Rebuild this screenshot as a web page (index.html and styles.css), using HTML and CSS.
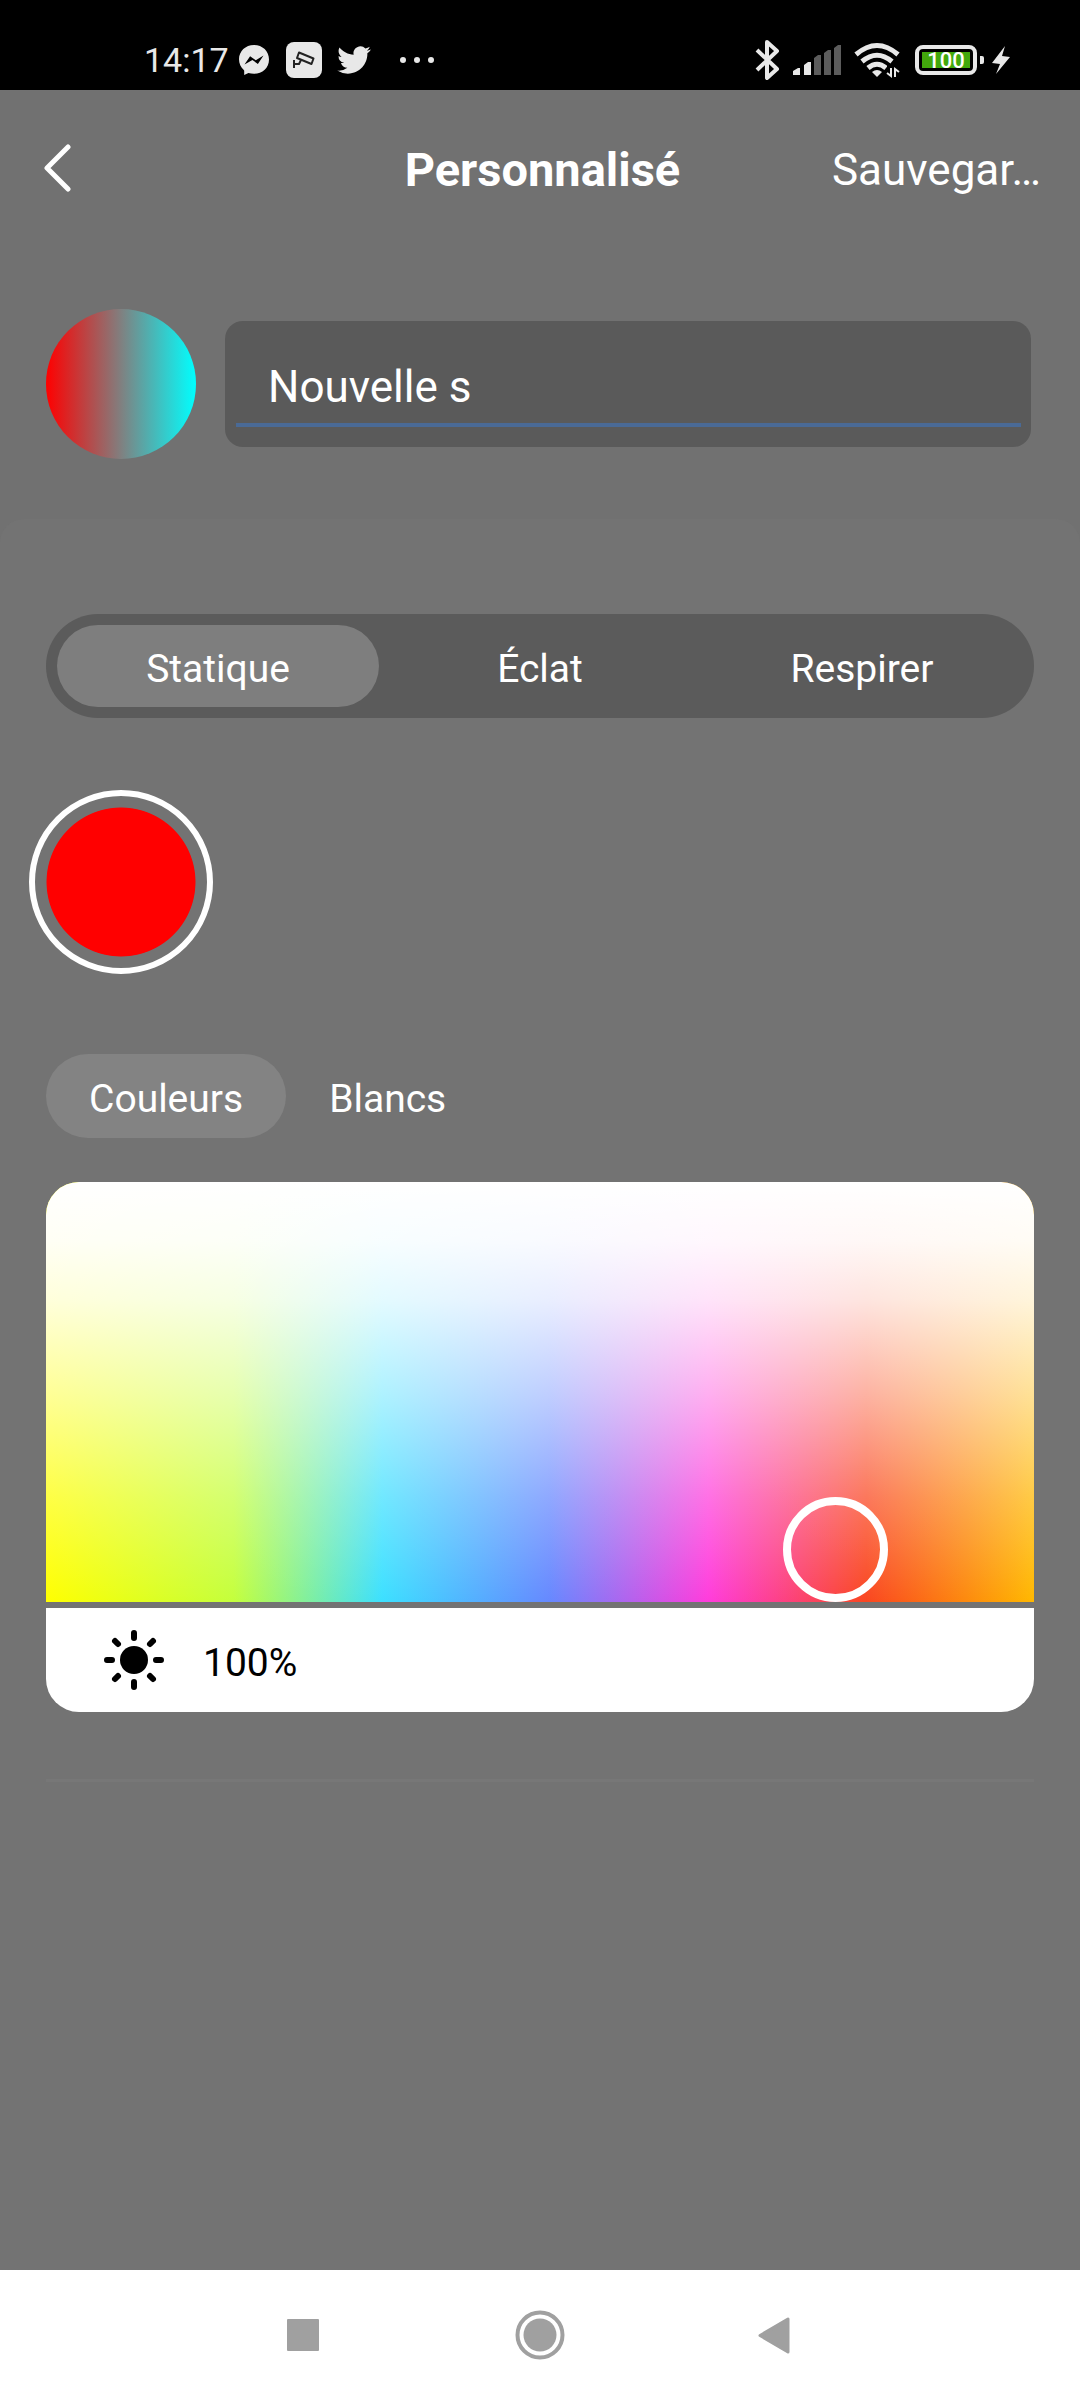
FILE: index.html
```html
<!DOCTYPE html>
<html lang="fr">
<head>
<meta charset="utf-8">
<meta name="viewport" content="width=device-width, initial-scale=1">
<title>Personnalisé</title>
<link rel="stylesheet" href="styles.css">
</head>
<body>
<div class="status-bar">
  <div class="status-left">
    <span class="clock">14:17</span>
    <svg class="icon-messenger" viewBox="0 0 30 30" width="30" height="30" aria-hidden="true">
      <path fill="#e8e8e8" d="M15 0C6.500 0 0 6.200 0 14.300c0 4.300 1.800 8 4.800 10.600.300.300.400.500.400.900V30l4.200-2c1.800.5 3.600.800 5.600.800 8.500 0 15-6.200 15-14.400S23.500 0 15 0z"/>
      <path fill="#000" d="M5.500 19.500l5.600-8.200 5.700 4 7.700-4.800-5.600 8.500-5.500-4z"/>
    </svg>
    <svg class="icon-camera" viewBox="0 0 36 36" width="36" height="36" aria-hidden="true">
      <rect width="36" height="36" rx="8" fill="#e8e8e8"/>
      <path fill="none" stroke="#222" stroke-width="2" stroke-linejoin="round" d="M13 10.500l14.500 6-2 5.500-14.500-6z"/>
      <path fill="none" stroke="#222" stroke-width="2" d="M15 18l-2 4-5 0M8 18v8"/>
    </svg>
    <svg class="icon-bird" viewBox="0 2 24 20" width="34" height="28" aria-hidden="true">
      <path fill="#e8e8e8" d="M23.950 4.570a10 10 0 01-2.820.770 4.960 4.960 0 002.160-2.720c-.950.550-2 .950-3.130 1.180a4.920 4.920 0 00-8.380 4.480C7.690 8.100 4.070 6.130 1.640 3.160a4.820 4.820 0 00-.670 2.480c0 1.710.870 3.210 2.190 4.100a4.900 4.900 0 01-2.230-.620v.060a4.920 4.920 0 003.950 4.830 5 5 0 01-2.210.080 4.940 4.940 0 004.600 3.420A9.870 9.870 0 010 19.540a14 14 0 007.550 2.210c9.050 0 14-7.500 14-13.980 0-.210 0-.420-.020-.630a9.940 9.940 0 002.460-2.550z"/>
    </svg>
    <svg class="icon-more" viewBox="0 0 36 8" width="36" height="8" aria-hidden="true">
      <g fill="#e8e8e8"><circle cx="4" cy="4" r="3"/><circle cx="18" cy="4" r="3"/><circle cx="32" cy="4" r="3"/></g>
    </svg>
  </div>
  <div class="status-right">
    <svg viewBox="0 0 26 40" width="26" height="40" aria-hidden="true">
      <path fill="none" stroke="#e8e8e8" stroke-width="4" stroke-linejoin="round" d="M2 10l20 19-10 9V2l10 9L2 30"/>
    </svg>
    <svg class="icon-signal" viewBox="0 0 50 32" width="50" height="32" aria-hidden="true">
      <g fill="#e8e8e8"><path d="M0 31v-4l5-3h2v7zM11 31V21l4-3h3v13z"/></g>
      <g fill="#5c5c5c"><path d="M21 31V14l4-3h3v20zM31 31V9l4-3h3v25zM41 31V4l4-3h3v30z"/></g>
    </svg>
    <svg class="icon-wifi" viewBox="0 0 46 36" width="46" height="36" aria-hidden="true">
      <g fill="none" stroke="#e8e8e8" stroke-width="5">
        <path d="M2 12.500q21-18 42 0M8 19.500q15-12.500 30 0M14 26q9-7.500 18 0"/>
      </g>
      <path fill="#e8e8e8" d="M18 30q5-4 10 0l-5 5z"/>
      <path fill="none" stroke="#000" stroke-width="4" d="M33 24h13"/>
      <path fill="none" stroke="#e8e8e8" stroke-width="2" d="M37 26v8l-4-3M41 35v-8l4 3"/>
    </svg>
    <div class="battery"><span class="battery-level">100</span></div>
    <svg class="icon-bolt" viewBox="0 0 20 30" width="20" height="30" aria-hidden="true">
      <path fill="#e8e8e8" d="M14 1L1 18l8 1-4 10 14-17-8-1z"/>
    </svg>
  </div>
</div>

<header class="app-bar">
  <button class="back" aria-label="Retour">
    <svg viewBox="0 0 28 48" width="28" height="48" aria-hidden="true">
      <path fill="none" stroke="#fff" stroke-width="5" stroke-linecap="round" stroke-linejoin="round" d="M24 3L3 24l21 21"/>
    </svg>
  </button>
  <h1 class="title">Personnalisé</h1>
  <button class="save">Sauvegar…</button>
</header>

<section class="scene">
  <div class="scene-preview"></div>
  <div class="name-field">
    <input class="name-input" type="text" value="Nouvelle s" aria-label="Nom de la scène">
  </div>
</section>

<main class="panel">
  <div class="segments" role="tablist">
    <button class="segment selected" role="tab" aria-selected="true">Statique</button>
    <button class="segment" role="tab" aria-selected="false">Éclat</button>
    <button class="segment" role="tab" aria-selected="false">Respirer</button>
  </div>

  <button class="swatch" aria-label="Rouge"></button>

  <div class="chips" role="tablist">
    <button class="chip selected" role="tab" aria-selected="true">Couleurs</button>
    <button class="chip" role="tab" aria-selected="false">Blancs</button>
  </div>

  <div class="picker">
    <div class="spectrum">
      <button class="picker-handle" aria-label="Couleur choisie"></button>
    </div>
    <div class="brightness">
      <svg viewBox="0 0 60 60" width="60" height="60" aria-hidden="true">
        <circle cx="30" cy="30" r="14"/>
        <g stroke="#000" stroke-width="6" stroke-linecap="round">
          <path d="M30 3v5M30 52v5M3 30h5M52 30h5M11 11l3 3M46 46l3 3M49 11l-3 3M14 46l-3 3"/>
        </g>
      </svg>
      <label class="brightness-value" for="brightness">100%</label>
      <input class="brightness-range" id="brightness" type="range" min="1" max="100" value="100">
    </div>
  </div>
  <hr class="divider">
</main>

<nav class="nav-bar">
  <button class="nav-button" aria-label="Applications récentes">
    <svg viewBox="0 0 50 50" width="50" height="50" aria-hidden="true"><rect x="9" y="9" width="32" height="32" rx="1" fill="#a0a0a0"/></svg>
  </button>
  <button class="nav-button" aria-label="Accueil">
    <svg viewBox="0 0 50 50" width="50" height="50" aria-hidden="true"><circle cx="25" cy="25" r="22.500" fill="none" stroke="#a0a0a0" stroke-width="4"/><circle cx="25" cy="25" r="16.500" fill="#a0a0a0"/></svg>
  </button>
  <button class="nav-button" aria-label="Précédent">
    <svg viewBox="0 0 50 50" width="50" height="50" aria-hidden="true"><path fill="#a0a0a0" stroke="#a0a0a0" stroke-width="3" stroke-linejoin="round" d="M36 9v33L8 25.500z"/></svg>
  </button>
</nav>
</body>
</html>
```
FILE: styles.css
```css
* {
  box-sizing: border-box;
}

body {
  margin: 0;
  min-height: 100vh;
  display: flex;
  flex-direction: column;
  background: #717171;
  color: #fff;
  font-family: Roboto, "Noto Sans", sans-serif;
}

button {
  margin: 0;
  padding: 0;
  border: 0;
  background: none;
  color: inherit;
  font: inherit;
}

svg {
  display: block;
  flex: none;
}

/* System status bar */
.status-bar {
  height: 90px;
  padding: 30px 69px 0 144px;
  display: flex;
  justify-content: space-between;
  background: #000;
  color: #e8e8e8;
}

.status-left,
.status-right {
  display: flex;
  align-items: center;
  height: 60px;
}

.clock {
  font-size: 34px;
  line-height: 40px;
}

.icon-messenger {
  margin-left: 10px;
}

.icon-camera {
  margin-left: 17px;
}

.icon-bird {
  margin-left: 15px;
}

.icon-more {
  margin-left: 28px;
}

.icon-signal {
  margin-left: 12px;
}

.icon-wifi {
  margin-left: 11px;
}

.battery {
  position: relative;
  width: 62px;
  height: 30px;
  margin-left: 15px;
  padding: 3px;
  border: 4px solid #e8e8e8;
  border-radius: 8px;
}

.battery::after {
  content: "";
  position: absolute;
  top: 7px;
  right: -11px;
  width: 4px;
  height: 8px;
  border-radius: 0 2px 2px 0;
  background: #e8e8e8;
}

.battery-level {
  display: block;
  height: 16px;
  background: #42a80c;
  color: #fff;
  font-size: 22px;
  font-weight: 500;
  line-height: 18px;
  text-align: center;
}

.icon-bolt {
  margin-left: 14px;
}

/* Title row */
.app-bar {
  height: 156px;
  padding: 0 39px 0 44px;
  display: grid;
  grid-template-columns: 1fr auto 1fr;
  align-items: center;
}

.back {
  justify-self: start;
}

.title {
  margin: 0;
  padding-top: 4px;
  font-size: 47px;
  font-weight: 700;
  line-height: 56px;
}

.save {
  justify-self: end;
  padding-top: 4px;
  font-size: 44px;
  line-height: 56px;
}

/* Scene name */
.scene {
  padding: 63px 49px 60px 46px;
  display: flex;
  align-items: center;
  gap: 29px;
}

.scene-preview {
  flex: none;
  width: 150px;
  height: 150px;
  border-radius: 50%;
  background: linear-gradient(90deg, #f00, #808080, #0ff);
}

.name-field {
  flex: 1;
  height: 126px;
  padding: 0 10px 20px 11px;
  border-radius: 18px;
  background: #5a5a5a;
}

.name-input {
  width: 100%;
  height: 106px;
  padding: 29px 32px 0;
  border: 0;
  border-bottom: 4px solid #4a6a96;
  outline: 0;
  background: none;
  color: #fff;
  font: 44px/52px Roboto, "Noto Sans", sans-serif;
}

/* Effect and colour panel */
.panel {
  flex: 1;
  padding: 95px 46px 0;
  border-radius: 24px 24px 0 0;
  background: #737373;
}

.segments {
  display: flex;
  height: 104px;
  padding: 11px;
  border-radius: 52px;
  background: #5b5b5b;
}

.segment {
  flex: 1;
  padding-top: 6px;
  border-radius: 41px;
  font-size: 39px;
}

.segment.selected {
  background: #7e7e7e;
}

.swatch {
  display: block;
  width: 184px;
  height: 184px;
  margin: 72px 0 80px -17px;
  padding: 11px;
  border: 6px solid #fff;
  border-radius: 50%;
  background: radial-gradient(circle closest-side, #f00 74px, transparent 75px) content-box;
}

.chips {
  display: flex;
}

.chip {
  height: 84px;
  padding: 6px 43px 0;
  border-radius: 42px;
  font-size: 39px;
}

.chip.selected {
  background: #838383;
}

.picker {
  display: flex;
  flex-direction: column;
  gap: 6px;
  margin-top: 44px;
  border-radius: 33px;
  overflow: hidden;
}

.spectrum {
  position: relative;
  height: 420px;
  background:
    linear-gradient(180deg, #fff, rgba(255, 255, 255, 0.96) 14%, rgba(255, 255, 255, 0.86) 28%, rgba(255, 255, 255, 0.57) 52%, rgba(255, 255, 255, 0.27) 75%, rgba(255, 255, 255, 0)),
    linear-gradient(90deg, #ff0 0%, #c4ff3c 19%, #3ce0ff 34%, #6688ff 51%, #ff3cdc 67%, #fa4620 83%, #ffb800 100%);
}

.picker-handle {
  position: absolute;
  left: 80%;
  bottom: 0;
  width: 105px;
  height: 105px;
  margin-left: -53px;
  border: 8px solid #fff;
  border-radius: 50%;
}

.brightness {
  position: relative;
  display: flex;
  align-items: center;
  gap: 39px;
  height: 104px;
  padding-left: 58px;
  background: #fff;
  color: #000;
}

.brightness-value {
  padding-top: 6px;
  font-size: 39px;
}

.brightness-range {
  position: absolute;
  inset: 0;
  width: 100%;
  height: 100%;
  margin: 0;
  opacity: 0;
}

.divider {
  height: 3px;
  margin: 67px 0 0;
  border: 0;
  background: #777;
}

/* System navigation */
.nav-bar {
  display: flex;
  justify-content: center;
  gap: 187px;
  height: 130px;
  background: #fff;
}
```
